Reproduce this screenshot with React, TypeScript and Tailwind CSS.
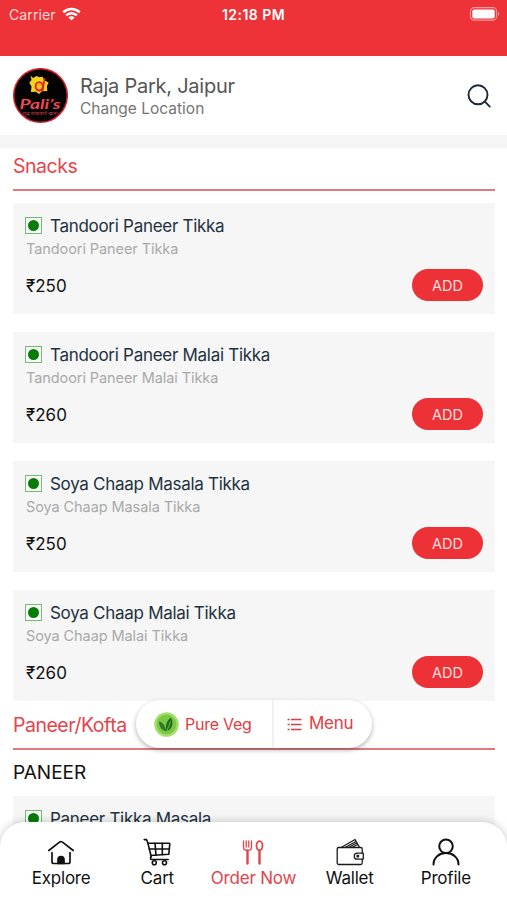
import type { ReactNode } from 'react';

interface MenuItem {
  name: string;
  price?: number;
}

const snacks: MenuItem[] = [
  { name: 'Tandoori Paneer Tikka', price: 250 },
  { name: 'Tandoori Paneer Malai Tikka', price: 260 },
  { name: 'Soya Chaap Masala Tikka', price: 250 },
  { name: 'Soya Chaap Malai Tikka', price: 260 },
];

const paneer: MenuItem[] = [{ name: 'Paneer Tikka Masala' }];

function StatusBar() {
  return (
    <div className="h-14 shrink-0 bg-[#ed3338] px-2 text-white">
      <div className="grid h-7 grid-cols-3 items-center">
        <div className="flex items-center gap-1.5 pl-px">
          <span className="text-[14px] tracking-[0.1px] text-[#ffd9da]">Carrier</span>
          <svg width="19" height="14" viewBox="0 0 19 14" fill="none" stroke="#fff" strokeWidth="2.5">
            <path d="M1.3 5.3a11.6 11.6 0 0 1 16.4 0" />
            <path d="M4.2 8.4a7.5 7.5 0 0 1 10.6 0" />
            <path d="M9.5 13.6 6.4 10.5a4.4 4.4 0 0 1 6.2 0z" fill="#fff" stroke="none" />
          </svg>
        </div>
        <span className="text-center text-[14px] font-semibold tracking-[0.45px]">12:18 PM</span>
        <svg className="-mr-px -mt-px justify-self-end" width="31" height="14" viewBox="0 0 31 14">
          <rect x="1.5" y="0.6" width="26" height="12.6" rx="3.6" fill="none" stroke="#f79a9c" strokeWidth="1.2" />
          <rect x="3.3" y="2.4" width="22.4" height="9" rx="2" fill="#fff" />
          <path d="M29 4.8c1.6.6 1.6 3.6 0 4.2z" fill="#f79a9c" />
        </svg>
      </div>
    </div>
  );
}

function Logo() {
  return (
    <svg width="56" height="56" viewBox="0 0 56 56" className="shrink-0">
      <circle cx="28.5" cy="27.5" r="26.8" fill="#050203" stroke="#d9232e" strokeWidth="1.5" />
      <path d="M18.500 7.500l2.600 2.400 3.400-1.800 3 1.200 3.200-.6 1.400 3.600 4.600 2.200-1.800 3.400.4 5.200-5.400.2-2.800 2.600-3.400-2.200-4.800.2.600-5.400-2.200-3.800 2.200-2.600z" fill="#f1d51c" />
      <ellipse cx="27.200" cy="18.300" rx="3.600" ry="4.200" fill="#f6c21b" stroke="#e3202a" strokeWidth="1.900" />
      <path d="M32.600 10.800 30.600 22.500" stroke="#e3202a" strokeWidth="1.700" strokeLinecap="round" />
      <text x="7.500" y="41" textLength="41" lengthAdjust="spacingAndGlyphs" fontFamily="Lato, sans-serif" fontWeight="700" fontStyle="italic" fontSize="14" fill="#ec4a54">
        Pali’s
      </text>
      <text x="10.500" y="47.300" textLength="35" lengthAdjust="spacingAndGlyphs" fontFamily="'Noto Sans', sans-serif" fontSize="4.500" fill="#d0404a">
        शुद्ध शाकाहारी खाना
      </text>
    </svg>
  );
}

function Header() {
  return (
    <header className="flex h-[79px] shrink-0 items-center bg-white pl-3 pr-4">
      <Logo />
      <div className="ml-3 flex-1 pt-px">
        <div className="text-[20px] leading-[24px] tracking-[-0.25px] text-[#555]">Raja Park, Jaipur</div>
        <div className="pt-px text-[15.5px] leading-[20px] text-[#757575]">Change Location</div>
      </div>
      <svg width="24" height="24" viewBox="0 0 24 24" fill="none" stroke="#1c2b39" strokeWidth="1.9" strokeLinecap="round">
        <circle cx="11" cy="10.8" r="9.5" />
        <path d="m17.9 17.7 4.9 4.9" />
      </svg>
    </header>
  );
}

function SectionTitle({ children }: { children: ReactNode }) {
  return (
    <h2 className="flex h-[43px] items-start border-b-2 border-[#e17a80] pt-1.5 text-[19.5px] leading-6 tracking-[-0.48px] text-[#e9434a]">
      {children}
    </h2>
  );
}

function ItemCard({ item }: { item: MenuItem }) {
  return (
    <div className="flex h-[111px] flex-col bg-[#f6f6f6] px-3 pt-3">
      <div className="flex h-[22px] items-center gap-2">
        <span className="-mt-px flex size-[17px] items-center justify-center border border-[#6fbd6f] bg-white">
          <span className="size-[11px] rounded-full bg-[#067d06]" />
        </span>
        <span className="text-[17px] leading-[22px] tracking-[-0.29px] text-[#22313f]">{item.name}</span>
      </div>
      {item.price !== undefined && (
        <>
          <div className="pl-px pt-0.5 text-[14.5px] leading-5 tracking-[-0.08px] text-[#a9a9a9]">{item.name}</div>
          <div className="mt-2.5 flex h-8 items-center justify-between pl-px">
            <span className="pt-[3px] text-[17px] text-[#111]">₹{item.price}</span>
            <button className="h-8 w-[71px] rounded-full bg-[#ed3237] pt-px text-[14.5px] text-[#ffdcdc]">ADD</button>
          </div>
        </>
      )}
    </div>
  );
}

function FloatingBar() {
  return (
    <div className="absolute left-[136px] top-[700px] flex h-12 w-[236px] rounded-full bg-white text-[16px] text-[#e13c43] shadow-[0_2px_5px_rgba(0,0,0,0.3)]">
      <button className="flex w-[138px] items-center gap-[6px] border-r-2 border-[#f0f0f0] pl-[18px] tracking-[-0.25px]">
        <svg width="25" height="25" viewBox="0 0 25 25">
          <circle cx="12.5" cy="12.5" r="12.3" fill="#a5df6e" />
          <circle cx="12.5" cy="12.5" r="10" fill="#7cc843" />
          <path d="M12.3 19.3C7 18.5 5.2 14.5 5 9.3c3.6 1.2 6.2 3.8 7.3 10z" fill="#2c7a2a" />
          <path d="M12.6 19.2c-1.8-5.5.2-10.5 4.200-13.700 3.200 5.500 2 11.500-4.200 13.700z" fill="#236b28" />
          <path d="M12.800 19.100c1.500-3.600 2.800-6.500 3.600-9.500" stroke="#7cc843" strokeWidth=".8" fill="none" />
        </svg>
        Pure Veg
      </button>
      <button className="flex flex-1 items-center gap-[7px] pl-[13px] text-[17px] tracking-[-0.3px]">
        <svg width="15" height="13" viewBox="0 0 15 13" fill="none" stroke="#e13c43" strokeWidth="1.500">
          <path d="M4 1.500h10.500M4 6.500h10.500M4 11.500h10.500" />
          <path d="M.6 1.500h2M.6 6.500h2M.6 11.500h2" />
        </svg>
        Menu
      </button>
    </div>
  );
}

function HomeIcon() {
  return (
    <svg width="28" height="28" viewBox="0 0 28 28" fill="none" stroke="#111" strokeWidth="1.700" strokeLinecap="round" strokeLinejoin="round">
      <path d="M1.800 12.500 12.500 4.100q1.500-1.100 3 0L26.200 12.500" />
      <path d="M5 14.500v9.200q0 1.800 1.800 1.800h14.400q1.800 0 1.800-1.800v-9.200" />
      <path d="M11 25.500v-4a3 3 0 0 1 6 0v4z" fill="#111" />
    </svg>
  );
}

function CartIcon() {
  return (
    <svg width="28" height="28" viewBox="0 0 28 28" fill="none" stroke="#111" strokeWidth="1.600" strokeLinecap="round" strokeLinejoin="round">
      <path d="M1.200 1.600h2.300l1.300 3.200 3.400 13.700" />
      <path d="M4.800 5.200h21.400q.7 0 .6.700l-1 10.400-18.200 1.200" />
      <path d="M6.100 11h20.300M12 5.200l1 11.800M19.300 5.200v11.400" />
      <path d="M8.200 18.500q-1.700 3 .6 3h16.400" />
      <circle cx="11.300" cy="24.700" r="2" />
      <circle cx="21.500" cy="24.700" r="2" />
    </svg>
  );
}

function CutleryIcon() {
  return (
    <svg width="28" height="28" viewBox="0 0 28 28" fill="none" stroke="#e2444b" strokeWidth="1.300" strokeLinecap="round" strokeLinejoin="round">
      <path d="M4.500 3v6q0 3 2.600 3.400h2.800q2.600-.4 2.600-3.400V3M7.200 3v6M9.800 3v6" />
      <path d="M8.500 12.500v13" strokeWidth="2.400" />
      <ellipse cx="20.500" cy="7.700" rx="3" ry="4.600" strokeWidth="1.800" />
      <path d="M20.500 12.500v13" strokeWidth="2.400" />
    </svg>
  );
}

function WalletIcon() {
  return (
    <svg width="28" height="28" viewBox="0 0 28 28" fill="none" stroke="#1b1b1b" strokeWidth="1.300" strokeLinecap="round" strokeLinejoin="round">
      <rect x="1.200" y="9.500" width="25" height="17" rx="1.500" />
      <path d="M5.500 9.300 19 1.500l4.500 7.800M9.500 9.300l10-5.600M13 9.300l7.300-4M16.500 9.300l4.700-2.500" />
      <path d="M27.300 15.200h-6.100a2.900 2.900 0 0 0 0 5.900h6.100z" fill="#fff" />
      <circle cx="21.800" cy="18.100" r=".9" />
    </svg>
  );
}

function ProfileIcon() {
  return (
    <svg width="28" height="28" viewBox="0 0 28 28" fill="none" stroke="#111" strokeWidth="2" strokeLinecap="round">
      <circle cx="14" cy="8.300" r="6.800" />
      <path d="M1.500 26.500c0-7 5.600-11.400 12.500-11.400s12.500 4.400 12.500 11.400" />
    </svg>
  );
}

const tabs = [
  { label: 'Explore', icon: <HomeIcon /> },
  { label: 'Cart', icon: <CartIcon /> },
  { label: 'Order Now', icon: <CutleryIcon />, active: true },
  { label: 'Wallet', icon: <WalletIcon /> },
  { label: 'Profile', icon: <ProfileIcon /> },
];

function TabBar() {
  return (
    <nav className="absolute inset-x-0 bottom-0 grid h-[78px] grid-cols-5 rounded-t-[25px] bg-white px-[13px] shadow-[0_0_10px_rgba(0,0,0,0.22)]">
      {tabs.map((tab) => (
        <button key={tab.label} className="flex flex-col items-center pt-4 text-[17px] leading-6 tracking-[-0.2px]">
          {tab.icon}
          <span className={tab.active ? 'whitespace-nowrap text-[#e2444b]' : 'text-[#111]'}>{tab.label}</span>
        </button>
      ))}
    </nav>
  );
}

export default function App() {
  return (
    <div className="relative flex h-[900px] w-[507px] flex-col overflow-hidden bg-white font-[Inter,sans-serif]">
      <StatusBar />
      <Header />
      <div className="h-[13px] shrink-0 bg-[#f5f5f5]" />
      <main className="min-h-0 flex-1 overflow-hidden pl-[13px] pr-3">
        <SectionTitle>Snacks</SectionTitle>
        <div className="flex flex-col gap-[18px] pt-3">
          {snacks.map((item) => (
            <ItemCard key={item.name} item={item} />
          ))}
        </div>
        <div className="pt-[6px]">
          <SectionTitle>Paneer/Kofta</SectionTitle>
        </div>
        <h3 className="h-[46px] pt-[11px] text-[19px] leading-6 text-[#111]">PANEER</h3>
        {paneer.map((item) => (
          <ItemCard key={item.name} item={item} />
        ))}
      </main>
      <FloatingBar />
      <TabBar />
    </div>
  );
}
